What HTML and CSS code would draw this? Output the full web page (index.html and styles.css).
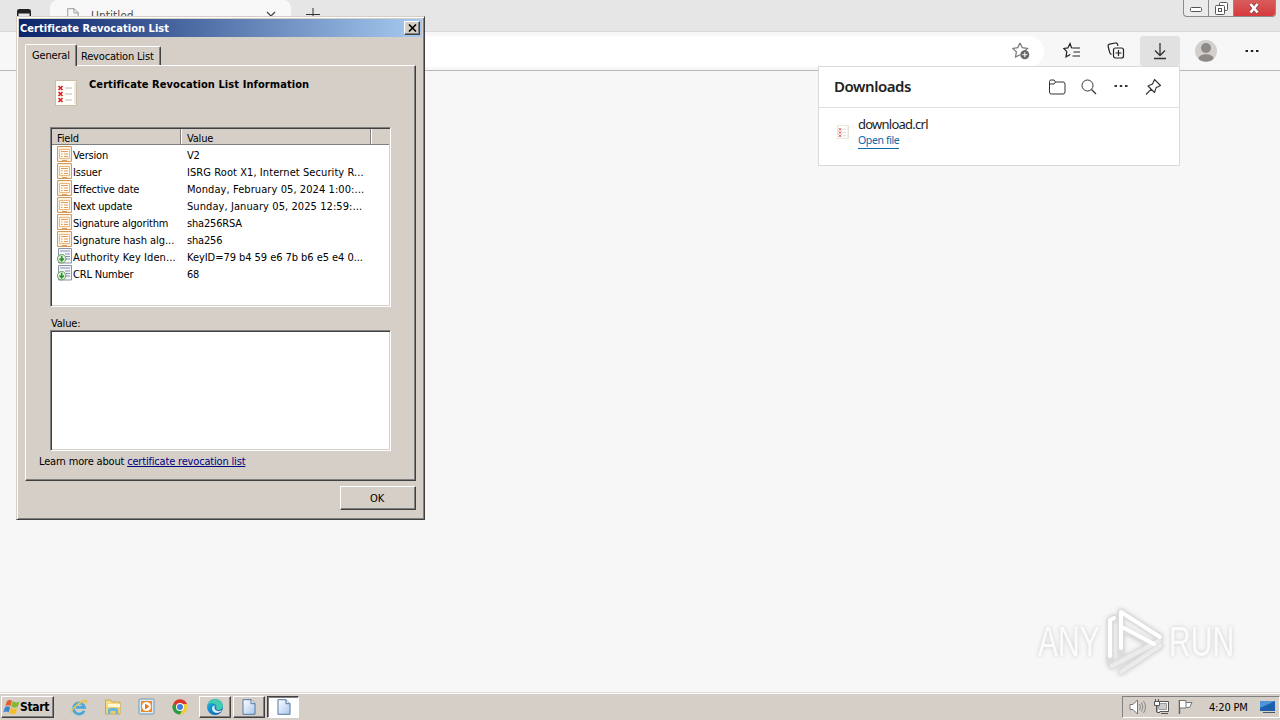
FILE: index.html
```html
<!DOCTYPE html>
<html lang="en">
<head>
<meta charset="utf-8">
<title>Certificate Revocation List</title>
<link rel="stylesheet" href="styles.css">
</head>
<body>
<svg width="0" height="0" class="defs">
  <defs>
    <linearGradient id="page" x2="1" y2="1"><stop offset="0" stop-color="#fff"/><stop offset="1" stop-color="#a9c6ee"/></linearGradient>
    <linearGradient id="edge" x2="1" y2="1"><stop offset="0" stop-color="#3cc6a0"/><stop offset=".35" stop-color="#1596d8"/><stop offset="1" stop-color="#0d4c9c"/></linearGradient>
    <symbol id="field" viewBox="0 0 15 16"><path d="M.5.5h14v15H.5z" fill="#fff0dc" stroke="#d39a60"/><path d="M2.500 3.500h10v9h-10z" fill="#fffaf2" stroke="#e9b980"/><path d="M4 5.500h7M7 8h4M7 10.500h4M4 8h1.500M4 10.500h1.500M5 14.500h5" stroke="#dd9d5c"/></symbol>
    <symbol id="ext" viewBox="0 0 15 16"><path d="M1.500.5h13v14.500h-13z" fill="#f4f5fa" stroke="#8b94a5"/><path d="M3 3h10M8 6h5M9 8.500h4M9 11h4" stroke="#8790b5"/><circle cx="4.700" cy="10.700" r="4.200" fill="#e9f6e5" stroke="#5c9c57"/><path d="M4.700 7.700v5M2.500 10.500l2.200 2.200 2.200-2.200" fill="none" stroke="#2f9430" stroke-width="1.700"/></symbol>
    <symbol id="crl" viewBox="0 0 22 26"><path d="M.5.5h21v25H.5z" fill="#fffefa" stroke="#c9bda8"/><path d="M20 2v22" stroke="#ded5c4"/><path d="M3.500 6l4 4m0-4l-4 4M3.500 12l4 4m0-4l-4 4M3.500 18l4 4m0-4l-4 4" stroke="#d9211f" stroke-width="1.700"/><path d="M10 8h7M10 14h7M10 20h7" stroke="#b9bcc0"/></symbol>
    <symbol id="doc" viewBox="0 0 14 16"><path d="M1 .7h8l4 4v10.600H1z" fill="url(#page)" stroke="#56779f"/><path d="M9 .7v4h4" fill="#e6f0fb" stroke="#56779f"/></symbol>
  </defs>
</svg>
<div class="screen">
  <header class="tabstrip">
    <svg class="tabactions" width="14" height="14" viewBox="0 0 14 14"><rect x=".75" y=".75" width="12.500" height="12.500" rx="1.500" fill="none" stroke="#222" stroke-width="1.500"/><path d="M1 1h12v3.500H1z" fill="#222"/></svg>
    <div class="tab">
      <svg width="12" height="15" viewBox="0 0 12 15"><path d="M.7.7h6.500l4 4v9.500H.7zM7 .7V5h4.300" fill="none" stroke="#999"/></svg>
      <span class="tabtitle">Untitled</span>
      <svg width="10" height="10" viewBox="0 0 10 10"><path d="M1 1l8 8M9 1L1 9" stroke="#444" stroke-width="1.200"/></svg>
    </div>
    <svg class="newtab" width="14" height="14" viewBox="0 0 14 14"><path d="M7 0v14M0 6.500h14" stroke="#333" stroke-width="1"/></svg>
    <div class="controls">
      <span class="ctl"><svg width="13" height="6" viewBox="0 0 13 6"><rect x=".5" y=".5" width="11" height="4" rx="1" fill="#fff" stroke="#555"/></svg></span>
      <span class="ctl"><svg width="13" height="13" viewBox="0 0 13 13"><rect x="4.500" y=".5" width="8" height="8" rx="1" fill="#fff" stroke="#555"/><rect x=".5" y="3.500" width="9" height="9" rx="1" fill="#fff" stroke="#555"/><rect x="3.500" y="6.500" width="3" height="3" fill="#fff" stroke="#555"/></svg></span>
      <span class="ctl close"><svg width="12" height="11" viewBox="0 0 12 11"><path d="M2.500 1l7 8.500M9.500 1l-7 8.500" stroke="#80454a" stroke-width="4"/><path d="M2.500 1l7 8.500M9.500 1l-7 8.500" stroke="#fff" stroke-width="2.700"/></svg></span>
    </div>
  </header>
  <nav class="toolbar">
    <div class="address"><svg width="19" height="18" viewBox="0 0 19 18"><path d="M8 1l2.300 4.700 5.200.8-3.800 3.700.5 2M8 12.800L3.500 15l.9-5.100L.7 6.400l5.100-.8L8 1" fill="none" stroke="#777" stroke-width="1.200"/><circle cx="12.800" cy="12.700" r="4.500" fill="#666"/><path d="M12.800 10.200v5M10.300 12.700h5" stroke="#fff"/></svg></div>
    <span class="tool"><svg width="18" height="18" viewBox="0 0 18 18"><path d="M10.500 6L8.500 5.800 7 1.500 4.900 5.900.8 6.500l3 3.100-.8 5.200 4.300-2.300M10.500 6h6.500M10.500 10h6.500M9.500 14H17" fill="none" stroke="#222" stroke-width="1.200"/></svg></span>
    <span class="tool"><svg width="18" height="18" viewBox="0 0 18 18"><rect x="6.500" y="6" width="10" height="10" rx="2" fill="none" stroke="#222" stroke-width="1.200"/><path d="M11.500 8v6M8.500 11h6M4.500 12.500C2.800 12 2.600 10.600 2.300 9L1.200 4.500C.9 3.300 1.300 2.500 2.600 2.200L8.300 1c1.200-.2 2 .3 2.300 1.500l.3 1.400" fill="none" stroke="#222" stroke-width="1.200"/></svg></span>
    <span class="tool on"><svg width="14" height="18" viewBox="0 0 14 18"><path d="M7 1v12M2 8.500l5 5 5-5M1 16.500h12" fill="none" stroke="#333" stroke-width="1.300"/></svg></span>
    <span class="tool face"><svg width="22" height="22" viewBox="0 0 22 22"><circle cx="11" cy="11" r="11" fill="#d2cfcd"/><circle cx="11" cy="8" r="5" fill="#8c8987"/><ellipse cx="11" cy="18" rx="7.500" ry="3.700" fill="#8c8987"/></svg></span>
    <span class="tool more"><svg width="14" height="4" viewBox="0 0 14 4"><path d="M.5 1h2.500v2H.5zM5.800 1h2.500v2H5.800zM11 1h2.500v2H11z" fill="#222"/></svg></span>
  </nav>
  <main class="page"></main>
  <footer class="taskbar">
    <div class="start"><svg width="17" height="16" viewBox="0 0 17 16"><path d="M4 2q2.500-2 5-.2L7.500 7q-2.500-1.700-5.200 0z" fill="#e95d2a"/><path d="M9.800 2.300q3 2 6.700.4l-2 5.200q-3.500 1.700-6.400-.4z" fill="#84b735"/><path d="M2 8.200q2.500-1.700 5.200 0l-1.600 5.300q-2.500-1.800-5.400 0z" fill="#3d83d0"/><path d="M7.900 8.700q3 2 6.400.5l-1.700 5.200q-3.500 1.700-6.300-.5z" fill="#f5bd2c"/></svg><b>Start</b></div>
    <div class="launch">
      <svg width="18" height="18" viewBox="0 0 18 18"><path d="M14.200 12.700A5.500 5.500 0 1 1 14.500 9.300H6" fill="none" stroke="#49a9dd" stroke-width="2.800"/><path d="M1 16C-1 11 13-1 17 2c1 1 .4 3-.4 4.500.2-7-13.600 3-15.600 9.500z" fill="#e6c25a"/></svg>
      <svg width="18" height="18" viewBox="0 0 18 18"><path d="M1.500 2h5l1.500 2h8v12h-14.500z" fill="#f5dd85" stroke="#c9a94b"/><path d="M4 6h12v3H4z" fill="#fff8d3"/><path d="M2 9h14v6H2z" fill="#edd074"/><path d="M4 16v-4q0-2 2-2h6q2 0 2 2v4h-2.500v-3H6.500v3z" fill="#68b8dc"/></svg>
      <svg width="18" height="18" viewBox="0 0 18 18"><rect x="1" y="1" width="15" height="15" rx="1" fill="#dbeaf4" stroke="#739ab8"/><path d="M3 3h11v11H3z" fill="#f18c24"/><circle cx="8.500" cy="8.500" r="4.500" fill="#fff"/><path d="M7 5.500v6l4.500-3z" fill="#e6781b"/></svg>
      <svg width="18" height="18" viewBox="0 0 18 18"><circle cx="8" cy="9" r="7.500" fill="#f4ca38"/><path d="M1.500 5.200A7.500 7.500 0 0 1 15 6H8l-3 5z" fill="#d9382b"/><path d="M1.500 5.200A7.500 7.500 0 0 0 8 16.500l3-6-6 0z" fill="#289b4a"/><circle cx="8" cy="9" r="4" fill="#fff"/><circle cx="8" cy="9" r="3" fill="#3f80dd"/></svg>
    </div>
    <div class="tasks">
      <span class="task"><svg width="18" height="18" viewBox="0 0 18 18"><circle cx="9" cy="9" r="8" fill="url(#edge)"/><path d="M2 6c3-7 15-6 15 2 0 4-5 5-7 3 2-5-3-7-8-5z" fill="#44cbb0"/><path d="M9 7.500c-2 4 2 7 7 4.500-2 4-9 4-10-1-.2-2 1-3.500 3-3.500z" fill="#d8edf2"/></svg></span>
      <span class="task"><svg width="14" height="16"><use href="#doc"/></svg></span>
      <span class="task pressed"><svg width="14" height="16"><use href="#doc"/></svg></span>
    </div>
    <div class="tray">
      <svg width="17" height="16" viewBox="0 0 17 16"><path d="M1 5.500h3L8.500 1v14L4 10.500H1z" fill="#fff" stroke="#777"/><path d="M10.500 5q2 3 0 6M12.500 3.500q3 4.500 0 9M14.500 2q4 6 0 12" fill="none" stroke="#888"/></svg>
      <svg width="17" height="16" viewBox="0 0 17 16"><path d="M3.500 2.500h12v10h-12zM8 14.500h7" fill="#fff" stroke="#555"/><path d="M5.500 4.500h8v6h-8z" fill="#ccc" stroke="#999"/><path d="M1.500 2.500h5v4h-5zM2.500 0v2M5.500 0v2M4 7v6.500h3" fill="#fff" stroke="#555"/></svg>
      <svg width="17" height="16" viewBox="0 0 17 16"><path d="M2.500 1v14" stroke="#666" stroke-width="1.500"/><path d="M3 1.500h6v7.500H3M9 3.500h6l-2.500 5H9" fill="#fff" stroke="#777"/></svg>
      <span class="clock">4:20 PM</span>
      <svg class="desk" width="16" height="14" viewBox="0 0 16 14"><path d="M0 1h15v10H0z" fill="#1c5fac"/><path d="M0 1h15L0 8z" fill="#4c95d8"/><path d="M3 12.500h12" stroke="#46576a"/></svg>
    </div>
  </footer>

  <section class="downloads">
    <div class="dlhead"><b>Downloads</b>
      <svg width="18" height="18" viewBox="0 0 18 18"><path d="M1.500 3.500Q1.500 2 3 2h3L7.500 4H15q2 0 2 2v8q0 2-2 2H3.500q-2 0-2-2zM1.500 6H6l1.500-2" fill="none" stroke="#333"/></svg>
      <svg width="18" height="18" viewBox="0 0 18 18"><circle cx="7.500" cy="7.500" r="5.500" fill="none" stroke="#333"/><path d="M11.500 11.500l4.500 4.500" stroke="#333" stroke-width="1.200"/></svg>
      <svg width="18" height="18" viewBox="0 0 18 18"><path d="M2.500 7H5v2H2.500zM7.800 7h2.400v2H7.800zM13 7h2.500v2H13z" fill="#333"/></svg>
      <svg width="18" height="18" viewBox="0 0 18 18"><path d="M10.500 1.500l6 6-4.500 2.300-1.500 4.700-6.500-6.500 4.500-2zM7.300 11.200L2 16.500" fill="none" stroke="#333" stroke-width="1.100" stroke-linejoin="round"/></svg>
    </div>
    <div class="dlitem"><svg width="12" height="14"><use href="#crl"/></svg><div class="dltext"><span class="dlname">download.crl</span><span class="open">Open file</span></div></div>
  </section>

  <div class="watermark">
    <span class="word">ANY</span>
    <svg width="64" height="70" viewBox="0 0 64 70" fill="none" stroke-linejoin="round" stroke-linecap="round"><path d="M8 57V14l4-2M19 50V6l39 25M19 22l32 18M10 60l47-25M19 66l39-26" stroke="#dcdcdc" stroke-width="6.500"/><path d="M10 60l47-25M19 66l39-26" stroke="#ebebeb" stroke-width="4.500"/><path d="M8 50V14l4-2M19 42V6l39 25M22 22l30 16" stroke="#fff" stroke-width="4"/></svg>
    <span class="word">RUN</span>
  </div>

  <section class="dialog">
    <div class="title"><b>Certificate Revocation List</b><span class="x"><svg width="9" height="8" viewBox="0 0 9 8"><path d="M1 .5l7 7M8 .5l-7 7" stroke="#000" stroke-width="1.600"/></svg></span></div>
    <div class="tabs"><span class="dtab active">General</span><span class="dtab">Revocation List</span></div>
    <div class="sheet">
      <div class="info"><svg width="22" height="26"><use href="#crl"/></svg><b>Certificate Revocation List Information</b></div>
      <div class="list">
        <div class="cols"><span>Field</span><span>Value</span><span></span></div>
        <div class="row"><svg class="ico"><use href="#field"/></svg><span class="k">Version</span><span>V2</span></div>
        <div class="row"><svg class="ico"><use href="#field"/></svg><span class="k">Issuer</span><span class="wide">ISRG Root X1, Internet Security R...</span></div>
        <div class="row"><svg class="ico"><use href="#field"/></svg><span class="k">Effective date</span><span class="wide">Monday, February 05, 2024 1:00:...</span></div>
        <div class="row"><svg class="ico"><use href="#field"/></svg><span class="k">Next update</span><span class="wide">Sunday, January 05, 2025 12:59:...</span></div>
        <div class="row"><svg class="ico"><use href="#field"/></svg><span class="k">Signature algorithm</span><span>sha256RSA</span></div>
        <div class="row"><svg class="ico"><use href="#field"/></svg><span class="k mid">Signature hash alg...</span><span>sha256</span></div>
        <div class="row"><svg class="ico"><use href="#ext"/></svg><span class="k wide">Authority Key Iden...</span><span class="mid">KeyID=79 b4 59 e6 7b b6 e5 e4 0...</span></div>
        <div class="row"><svg class="ico"><use href="#ext"/></svg><span class="k">CRL Number</span><span>68</span></div>
      </div>
      <div class="label">Value:</div>
      <div class="box"></div>
      <div class="learn">Learn more about <span class="link">certificate revocation list</span></div>
    </div>
    <div class="ok">OK</div>
  </section>
</div>
</body>
</html>
```
FILE: styles.css
```css
* { box-sizing: border-box; }
body { margin: 0; font: 11px/17px "DejaVu Sans Condensed", "DejaVu Sans", sans-serif; font-stretch: condensed; letter-spacing: -0.18px; color: #000; }
svg { display: block; flex: none; }
.defs { position: absolute; }
.screen { position: relative; width: 1280px; height: 720px; overflow: hidden; display: flex; flex-direction: column; background: #f7f7f7; white-space: nowrap; }

.tabstrip { height: 31px; display: flex; background: #e6e6e6; flex: none; }
.tabactions { margin: 9px 0 0 17px; }
.tab { width: 241px; height: 31px; margin-left: 19px; padding: 0 15px 0 17px; display: flex; align-items: center; border-radius: 8px 8px 0 0; background: #f8f8f8; }
.tabtitle { flex: 1; padding: 1px 0 0 12px; font-size: 12px; letter-spacing: 0; color: #555; }
.newtab { margin: 8px 0 0 15px; }
.controls { margin-left: auto; margin-right: 4px; width: 93px; height: 17px; display: flex; border: 1px solid #8b8b8b; border-top: 0; border-radius: 0 0 4px 4px; overflow: hidden; background: #ebebeb; }
.ctl { width: 25px; display: flex; align-items: center; justify-content: center; border-right: 1px solid #8b8b8b; }
.ctl:first-child { padding-top: 4px; }
.close { flex: 1; border: 0; padding-right: 1px; background: linear-gradient(#d85c5c, #d63a3d); }

.toolbar { height: 40px; flex: none; display: flex; align-items: center; background: #f7f7f7; border-top: 1px solid #d9d9d9; border-bottom: 1px solid #b8b8b8; }
.address { width: 944px; height: 31px; margin-left: 100px; padding-right: 13px; display: flex; align-items: center; justify-content: flex-end; background: #fff; border-radius: 16px; }
.tool { width: 44px; height: 30px; display: flex; align-items: center; justify-content: center; }
.tool:nth-child(2) { margin-left: 6px; }
.on { width: 40px; margin-left: 2px; background: #e1e1e1; border-radius: 3px; }
.face { margin-left: 4px; }
.more { margin-left: 2px; }
.page { flex: 1; }

.taskbar { height: 28px; flex: none; display: flex; padding-top: 4px; background: #d5cfc8; box-shadow: inset 0 1px #e0ddd7, inset 0 2px #fff; }
.start, .task, .ok, .x { background: #d5cfc8; border: 1px solid; border-color: #fff #404040 #404040 #fff; box-shadow: inset -1px -1px #808080; }
.start { width: 53px; height: 22px; margin-left: 1px; padding-left: 1px; display: flex; align-items: center; font-size: 12px; letter-spacing: -0.3px; }
.launch { display: flex; gap: 16px; padding: 2px 0 0 16px; }
.tasks { display: flex; gap: 2px; margin-left: 9px; }
.task { width: 32px; height: 22px; display: flex; align-items: center; justify-content: center; }
.pressed { background: #fff; border-color: #404040 #fff #fff #404040; box-shadow: inset 1px 1px #808080; }
.pressed svg { margin-left: 2px; }
.tray { width: 158px; height: 22px; margin-left: auto; display: flex; align-items: center; gap: 7px; padding-left: 6px; border: 1px solid; border-color: #808080 #fff #fff #808080; }
.clock { margin-left: 8px; width: 41px; }
.desk { margin-left: 3px; }

.downloads { position: absolute; left: 818px; top: 66px; width: 362px; height: 100px; background: #fff; border: 1px solid #dadada; font-family: "Noto Sans", sans-serif; font-stretch: normal; }
.dlhead { height: 41px; padding: 0 17px 0 15px; display: flex; align-items: center; gap: 14px; border-bottom: 1px solid #e1e1e1; font-size: 15px; letter-spacing: -0.45px; color: #222; }
.dlhead b { flex: 1; font-weight: 600; margin-top: -2px; }
.dlhead svg { margin-top: -1px; }
.dlitem { display: flex; padding: 8px 0 0 18px; }
.dlitem > svg { margin-top: 9px; opacity: .9; }
.dltext { margin-left: 9px; display: flex; flex-direction: column; align-items: flex-start; }
.dlname { font-size: 13px; letter-spacing: -0.75px; color: #222; }
.open { font-size: 10.5px; line-height: 14px; padding-bottom: 1px; letter-spacing: -0.38px; color: #0768ac; border-bottom: 1px solid #0768ac; }

.watermark { position: absolute; left: 1038px; top: 605px; display: flex; align-items: center; filter: drop-shadow(0 0 2px #ccc); }
.watermark svg { margin: 0 3px 0 1px; }
.word { width: 63px; font: 43px/72px "Liberation Sans", sans-serif; letter-spacing: 0; color: #fbfbfb; transform: scaleX(.7); transform-origin: 0 50%; }

.dialog { position: absolute; left: 16px; top: 16px; width: 409px; height: 504px; padding: 2px; background: #d5cfc8; border: 1px solid; border-color: #d5cfc8 #404040 #404040 #d5cfc8; box-shadow: inset 1px 1px #fff, inset -1px -1px #808080; }
.title { height: 18px; padding: 0 2px 0 1px; display: flex; align-items: center; justify-content: space-between; color: #fff; letter-spacing: 0.04px; background: linear-gradient(90deg, #0a246a, #a6caf0); }
.x { width: 16px; height: 14px; display: flex; align-items: center; justify-content: center; }
.tabs { height: 28px; padding: 8px 0 0 6px; display: flex; align-items: flex-end; }
.dtab { height: 19px; padding: 2px 5px 0 3px; border: 1px solid; border-color: #fff #404040 transparent transparent; border-bottom: 0; border-radius: 2px 2px 0 0; box-shadow: inset -1px 0 #808080; line-height: 16px; }
.dtab:last-child { width: 84px; }
.active { width: 52px; height: 22px; padding: 3px 0 0 6px; margin-bottom: -1px; position: relative; background: #d5cfc8; border-left-color: #fff; }
.sheet { width: 391px; height: 416px; margin-left: 6px; border: 1px solid; border-color: #fff #404040 #404040 #fff; box-shadow: inset -1px -1px #808080; }
.info { height: 61px; padding: 14px 0 0 29px; display: flex; gap: 12px; letter-spacing: 0.08px; }
.info b { margin-top: -4px; }
.list, .box { width: 341px; margin-left: 24px; background: #fff; border: 1px solid; border-color: #808080 #fff #fff #808080; box-shadow: inset 1px 1px #404040, inset -1px -1px #d5cfc8; padding: 1px; }
.list { height: 180px; }
.cols { display: flex; height: 16px; margin-bottom: 1px; background: #d5cfc8; border-bottom: 1px solid #808080; }
.cols span { padding: 1px 0 0 5px; border-right: 1px solid #808080; box-shadow: inset 1px 0 #fff; line-height: 17px; }
.cols span:nth-child(1) { width: 129px; box-shadow: none; }
.cols span:nth-child(2) { width: 190px; padding-left: 6px; }
.cols span:nth-child(3) { flex: 1; border: 0; }
.row { display: flex; height: 17px; padding: 1px 0 0 5px; }
.ico { width: 15px; height: 16px; margin-top: -1px; }
.k { width: 115px; padding-left: 1px; }
.mid { letter-spacing: -0.05px; }
.wide { letter-spacing: 0.08px; }
.label { height: 23px; margin-left: 25px; padding-top: 8px; }
.box { height: 121px; }
.learn { margin: 2px 0 0 13px; }
.link { color: #000080; text-decoration: underline; }
.ok { width: 76px; height: 24px; margin: 5px 0 0 321px; padding-right: 2px; text-align: center; line-height: 23px; }
```
